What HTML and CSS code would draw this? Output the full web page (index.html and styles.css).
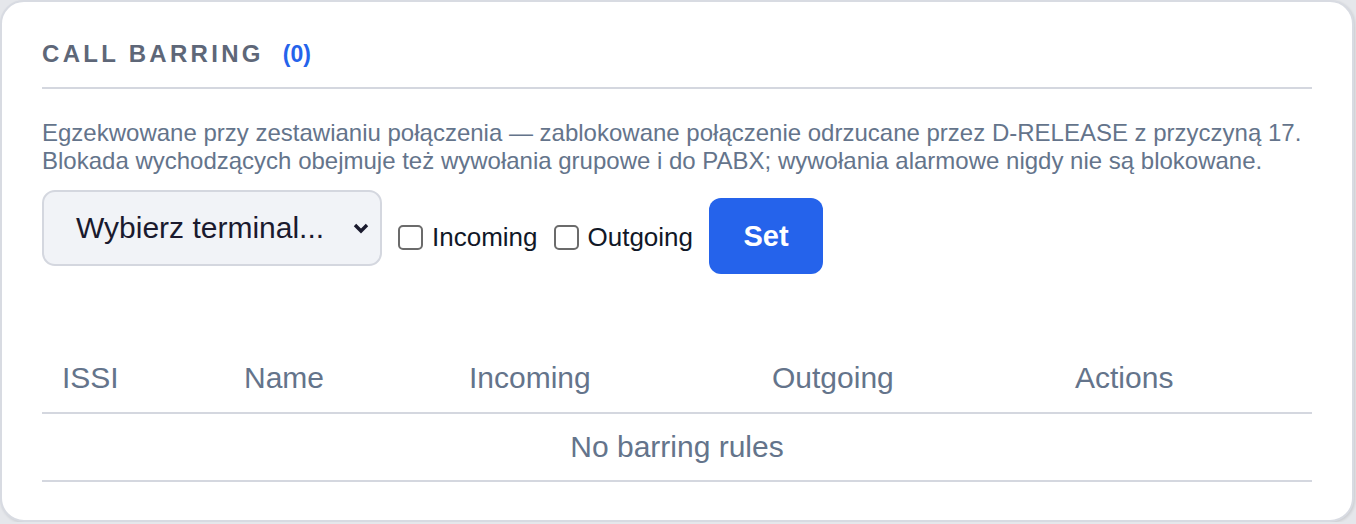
FILE: index.html
```html
<!DOCTYPE html>
<html lang="pl">
<head>
  <meta charset="UTF-8" />
  <title>Call barring</title>
  <link rel="stylesheet" href="styles.css">
</head>
<body>
  <section class="card">
    <h2 class="card-title">CALL BARRING <span class="count">(0)</span></h2>
    <p class="hint">
      Egzekwowane przy zestawianiu połączenia — zablokowane połączenie odrzucane przez D-RELEASE z przyczyną 17.<br>
      Blokada wychodzących obejmuje też wywołania grupowe i do PABX; wywołania alarmowe nigdy nie są blokowane.
    </p>
    <div class="controls">
      <div class="select">
        <span>Wybierz terminal...</span>
        <svg width="16" height="12" viewBox="0 0 16 12"><path d="M2 3 L8 9 L14 3" fill="none" stroke="#1a1a2e" stroke-width="3.4"/></svg>
      </div>
      <label class="check"><span class="box"></span>Incoming</label>
      <label class="check"><span class="box"></span>Outgoing</label>
      <button class="btn">Set</button>
    </div>
    <table class="rules">
      <thead>
        <tr>
          <th class="c-issi">ISSI</th>
          <th class="c-name">Name</th>
          <th class="c-in">Incoming</th>
          <th class="c-out">Outgoing</th>
          <th>Actions</th>
        </tr>
      </thead>
      <tbody>
        <tr><td colspan="5" class="empty">No barring rules</td></tr>
      </tbody>
    </table>
  </section>
</body>
</html>
```

FILE: styles.css
```css
body {
  margin: 0;
  font-family: "Liberation Sans", Arial, sans-serif;
  background: #e5e7eb;
}

.card {
  box-sizing: border-box;
  width: 1354px;
  height: 522px;
  background: #fff;
  border: 2px solid #d8dbe2;
  border-radius: 24px;
  box-shadow: 1px 1px 3px rgba(0, 0, 0, 0.12);
  padding: 34px 40px 0 40px;
}

.card-title {
  margin: 0;
  padding-bottom: 15px;
  border-bottom: 2px solid #d4d7df;
  font-size: 24px;
  font-weight: bold;
  letter-spacing: 3.3px;
  color: #5e6778;
  line-height: 36px;
}

.count {
  margin-left: 9px;
  font-size: 23px;
  letter-spacing: 0;
  color: #2563eb;
}

.hint {
  margin: 30px 0 0 0;
  font-size: 24px;
  line-height: 28px;
  color: #64748b;
}

.controls {
  display: flex;
  align-items: flex-start;
  gap: 16px;
  margin-top: 15px;
}

.select {
  box-sizing: border-box;
  width: 340px;
  height: 76px;
  display: flex;
  align-items: center;
  justify-content: space-between;
  padding: 0 11px 0 32px;
  background: #f1f3f7;
  border: 2px solid #d4d7df;
  border-radius: 13px;
  font-size: 30px;
  color: #1a1a2e;
}

.check {
  display: flex;
  align-items: center;
  gap: 9px;
  margin-top: 32px;
  font-size: 26px;
  color: #111827;
}

.box {
  width: 25px;
  height: 25px;
  box-sizing: border-box;
  border: 2px solid #6b6b6b;
  border-radius: 5px;
}

.btn {
  width: 114px;
  height: 76px;
  margin-top: 8px;
  border: none;
  border-radius: 12px;
  background: #2563eb;
  color: #fff;
  font-family: inherit;
  font-size: 29px;
  font-weight: bold;
}

.rules {
  width: 100%;
  margin-top: 69px;
  border-collapse: collapse;
  font-size: 30px;
  color: #64748b;
}

.rules th {
  text-align: left;
  font-weight: normal;
  padding: 0 20px;
  height: 69px;
  border-bottom: 2px solid #d4d7df;
}

.c-issi { width: 142px; }
.c-name { width: 185px; }
.c-in { width: 263px; }
.c-out { width: 263px; }

.rules td {
  height: 64px;
  border-bottom: 2px solid #d4d7df;
}

.empty {
  text-align: center;
}
```
